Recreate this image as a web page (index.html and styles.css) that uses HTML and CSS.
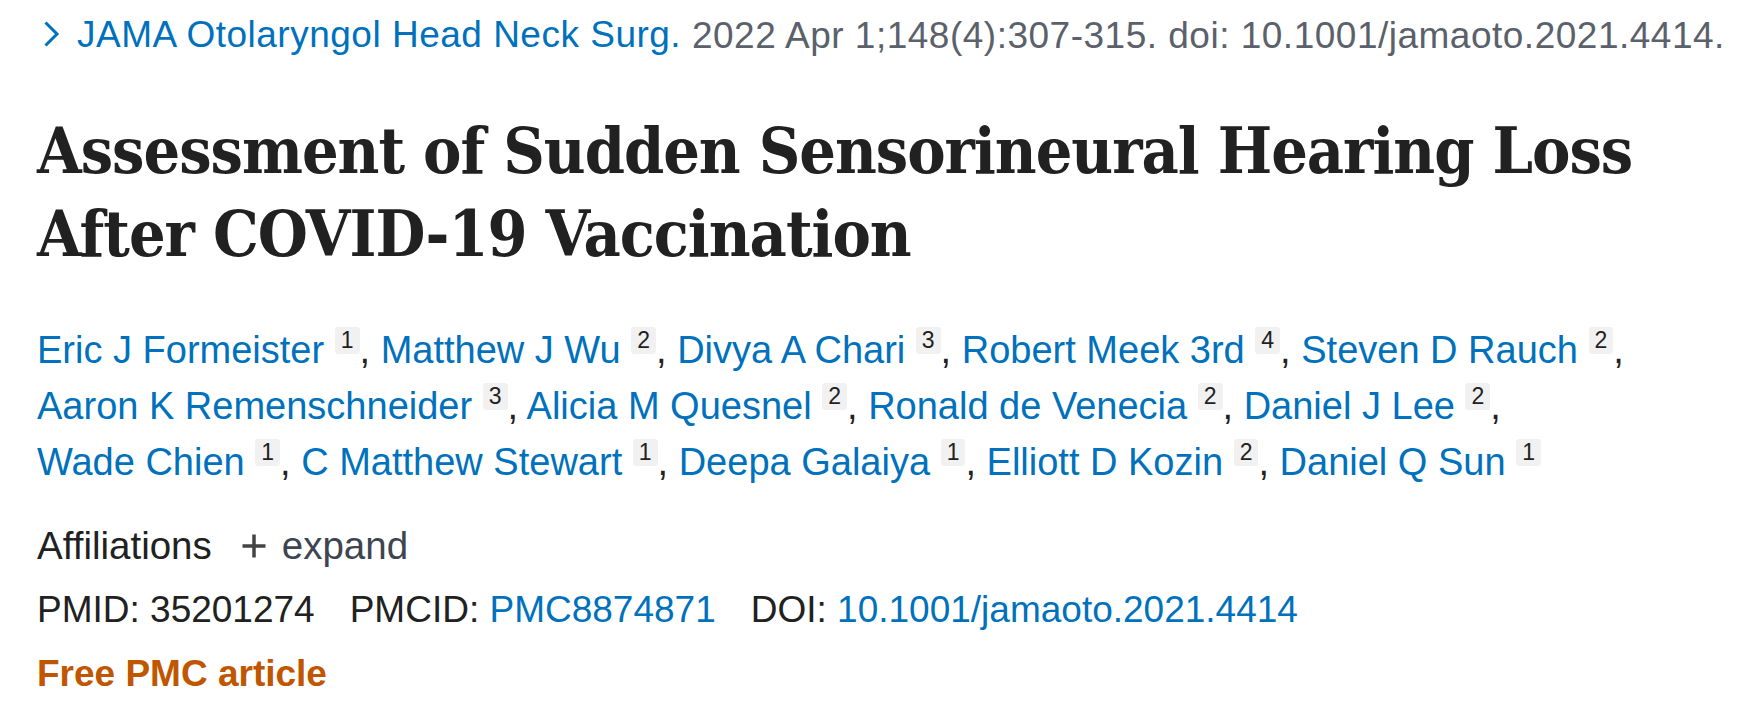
FILE: index.html
```html
<!DOCTYPE html>
<html lang="en">
<head>
  <meta charset="UTF-8">
  <title>Assessment of Sudden Sensorineural Hearing Loss After COVID-19 Vaccination</title>
  <link rel="stylesheet" href="styles.css">
</head>
<body>
  <main class="article-header">
    <div class="citation">
      <a class="journal" href="#">
        <svg class="chevron" width="17" height="28" viewBox="0 0 17 28"><polyline points="2.5,2.5 14,14 2.5,25.5" fill="none" stroke="#0071bc" stroke-width="3"/></svg>
        <span>JAMA Otolaryngol Head Neck Surg.</span>
      </a>
      <span class="cit">2022 Apr 1;148(4):307-315. doi: 10.1001/jamaoto.2021.4414.</span>
    </div>

    <h1 class="heading-title">Assessment of Sudden Sensorineural Hearing Loss After COVID-19 Vaccination</h1>

    <div class="authors-list">
      <span class="author"><a href="#">Eric J Formeister</a> <span class="aff">1</span>,</span>
      <span class="author"><a href="#">Matthew J Wu</a> <span class="aff">2</span>,</span>
      <span class="author"><a href="#">Divya A Chari</a> <span class="aff">3</span>,</span>
      <span class="author"><a href="#">Robert Meek 3rd</a> <span class="aff">4</span>,</span>
      <span class="author"><a href="#">Steven D Rauch</a> <span class="aff">2</span>,</span>
      <span class="author"><a href="#">Aaron K Remenschneider</a> <span class="aff">3</span>,</span>
      <span class="author"><a href="#">Alicia M Quesnel</a> <span class="aff">2</span>,</span>
      <span class="author"><a href="#">Ronald de Venecia</a> <span class="aff">2</span>,</span>
      <span class="author"><a href="#">Daniel J Lee</a> <span class="aff">2</span>,</span>
      <span class="author"><a href="#">Wade Chien</a> <span class="aff">1</span>,</span>
      <span class="author"><a href="#">C Matthew Stewart</a> <span class="aff">1</span>,</span>
      <span class="author"><a href="#">Deepa Galaiya</a> <span class="aff">1</span>,</span>
      <span class="author"><a href="#">Elliott D Kozin</a> <span class="aff">2</span>,</span>
      <span class="author"><a href="#">Daniel Q Sun</a> <span class="aff">1</span></span>
    </div>

    <div class="affiliations">
      <span>Affiliations</span>
      <button class="expand">
        <svg width="26" height="26" viewBox="0 0 26 26"><path d="M13 1.5v23M1.5 13h23" stroke="#444" stroke-width="3.5"/></svg>
        <span>expand</span>
      </button>
    </div>

    <ul class="identifiers">
      <li>PMID: <strong>35201274</strong></li>
      <li>PMCID: <a href="#">PMC8874871</a></li>
      <li>DOI: <a href="#">10.1001/jamaoto.2021.4414</a></li>
    </ul>

    <div class="free-label">Free PMC article</div>
  </main>
</body>
</html>
```

FILE: styles.css
```css
body {
  margin: 0;
  background: #fff;
  font-family: 'Liberation Sans', Arial, sans-serif;
  color: #212121;
}

a {
  color: #0071bc;
  text-decoration: none;
}

.article-header {
  padding: 13px 30px 0 37px;
  width: 1697px;
}

.citation {
  font-size: 37px;
  line-height: 44px;
  letter-spacing: 0.5px;
  color: #5b616b;
  white-space: nowrap;
}

.journal {
  display: inline-flex;
  align-items: center;
  gap: 17px;
  margin-left: 6px;
}

.chevron {
  display: block;
  margin-top: -2px;
}

.heading-title {
  margin: 51px 0 0;
  font-family: 'DejaVu Serif Condensed', 'DejaVu Serif', serif;
  font-weight: bold;
  font-size: 64px;
  line-height: 83px;
  letter-spacing: -1px;
  color: #212121;
}

.authors-list {
  margin-top: 47px;
  font-size: 38px;
  line-height: 56px;
  color: #212121;
}

.author {
  white-space: nowrap;
}

.aff {
  display: inline-block;
  font-size: 23px;
  line-height: 27px;
  padding: 0 6px;
  background: #f1f1f1;
  border-radius: 3px;
  vertical-align: 15px;
  color: #212121;
}

.affiliations {
  margin-top: 34px;
  font-size: 38.5px;
  line-height: 44px;
  display: flex;
  align-items: center;
  gap: 29px;
}

.expand {
  display: flex;
  align-items: center;
  gap: 15px;
  border: 0;
  background: none;
  padding: 0;
  font: inherit;
  color: #3d4551;
}

.identifiers {
  list-style: none;
  margin: 20px 0 0;
  padding: 0;
  display: flex;
  gap: 35px;
  font-size: 37px;
  line-height: 44px;
}

.identifiers strong {
  font-weight: normal;
}

.free-label {
  margin-top: 20px;
  font-size: 37px;
  line-height: 44px;
  font-weight: bold;
  color: #c05600;
}
```
